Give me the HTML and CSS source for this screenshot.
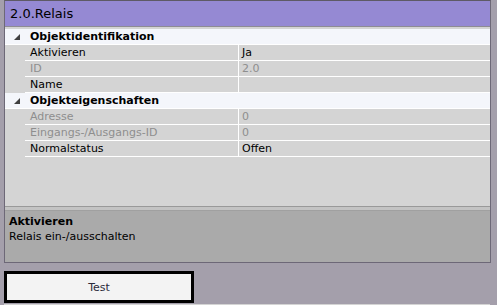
FILE: index.html
```html
<!DOCTYPE html>
<html lang="de">
<head>
    <meta charset="UTF-8">
    <meta name="viewport" content="width=device-width, initial-scale=1.0">
    <title>2.0.Relais</title>
    <link rel="stylesheet" href="styles.css">
</head>
<body>

    <div class="panel">
        <div class="title">2.0.Relais</div>

        <div class="grid">
            <div class="section">
                <svg class="arrow" width="6" height="6" viewBox="0 0 6 6"><polygon points="6,0 6,6 0,6" fill="#404040"/></svg>
                <span>Objektidentifikation</span>
            </div>
            <div class="row">
                <div class="name">Aktivieren</div>
                <div class="value">Ja</div>
            </div>
            <div class="row disabled">
                <div class="name">ID</div>
                <div class="value">2.0</div>
            </div>
            <div class="row">
                <div class="name">Name</div>
                <div class="value"></div>
            </div>

            <div class="section">
                <svg class="arrow" width="6" height="6" viewBox="0 0 6 6"><polygon points="6,0 6,6 0,6" fill="#404040"/></svg>
                <span>Objekteigenschaften</span>
            </div>
            <div class="row disabled">
                <div class="name">Adresse</div>
                <div class="value">0</div>
            </div>
            <div class="row disabled">
                <div class="name">Eingangs-/Ausgangs-ID</div>
                <div class="value">0</div>
            </div>
            <div class="row">
                <div class="name">Normalstatus</div>
                <div class="value">Offen</div>
            </div>
        </div>

        <div class="splitter"></div>

        <div class="help">
            <div class="help-title">Aktivieren</div>
            <div>Relais ein-/ausschalten</div>
        </div>
    </div>

    <button type="button" class="test-btn">Test</button>

    <div class="next"></div>

</body>
</html>
```

FILE: styles.css
```css
body {
    margin: 0;
    background-color: #a49fab;
    font-family: "DejaVu Sans", Verdana, sans-serif;
    font-size: 11px;
    color: #000;
    height: 305px;
    overflow: hidden;
}
.panel {
    margin: 0 6px 0 4px;
    border: 1px solid #6d6877;
    border-top-color: #5e5a66;
}
.title {
    height: 25px;
    line-height: 25px;
    padding-left: 5px;
    font-size: 13px;
    background-color: #9589d3;
    border-bottom: 1px solid #8d8b93;
}
.grid {
    height: 177px;
    padding-top: 2px;
    background-color: #d4d4d4;
    border-bottom: 1px solid #999;
}
.section {
    display: flex;
    align-items: center;
    height: 15px;
    background-color: #f4f6fb;
    border-bottom: 1px solid #fff;
    font-weight: bold;
}
.section .arrow {
    margin: 1px 6px 0 9px;
}
.section span {
    margin-left: 4px;
}
.row {
    display: flex;
    height: 16px;
    margin-left: 20px;
}
.row .name,
.row .value {
    height: 15px;
    line-height: 15px;
    border-bottom: 1px solid #fff;
    white-space: nowrap;
}
.row .name {
    width: 208px;
    padding-left: 5px;
    border-right: 1px solid #fff;
}
.row .value {
    flex: 1;
    padding-left: 3px;
}
.row.disabled {
    color: #8e8e8e;
}
.splitter {
    height: 3px;
    background-color: #c3c3c3;
}
.help {
    height: 48px;
    padding: 3px 4px 0;
    line-height: 15px;
    background-color: #aaaaaa;
    border-top: 1px solid #a0a0a0;
}
.help-title {
    font-weight: bold;
}
.test-btn {
    display: block;
    margin: 8px 0 0 4px;
    width: 190px;
    height: 32px;
    border: 3px solid #000;
    background-color: #f3f3f3;
    font-family: "DejaVu Sans", Verdana, sans-serif;
    font-size: 11px;
    color: #2a2a3a;
    padding: 0;
}
.next {
    margin: 1px 7px 0 4px;
    height: 4px;
    background-color: #d4d4d4;
}
```
